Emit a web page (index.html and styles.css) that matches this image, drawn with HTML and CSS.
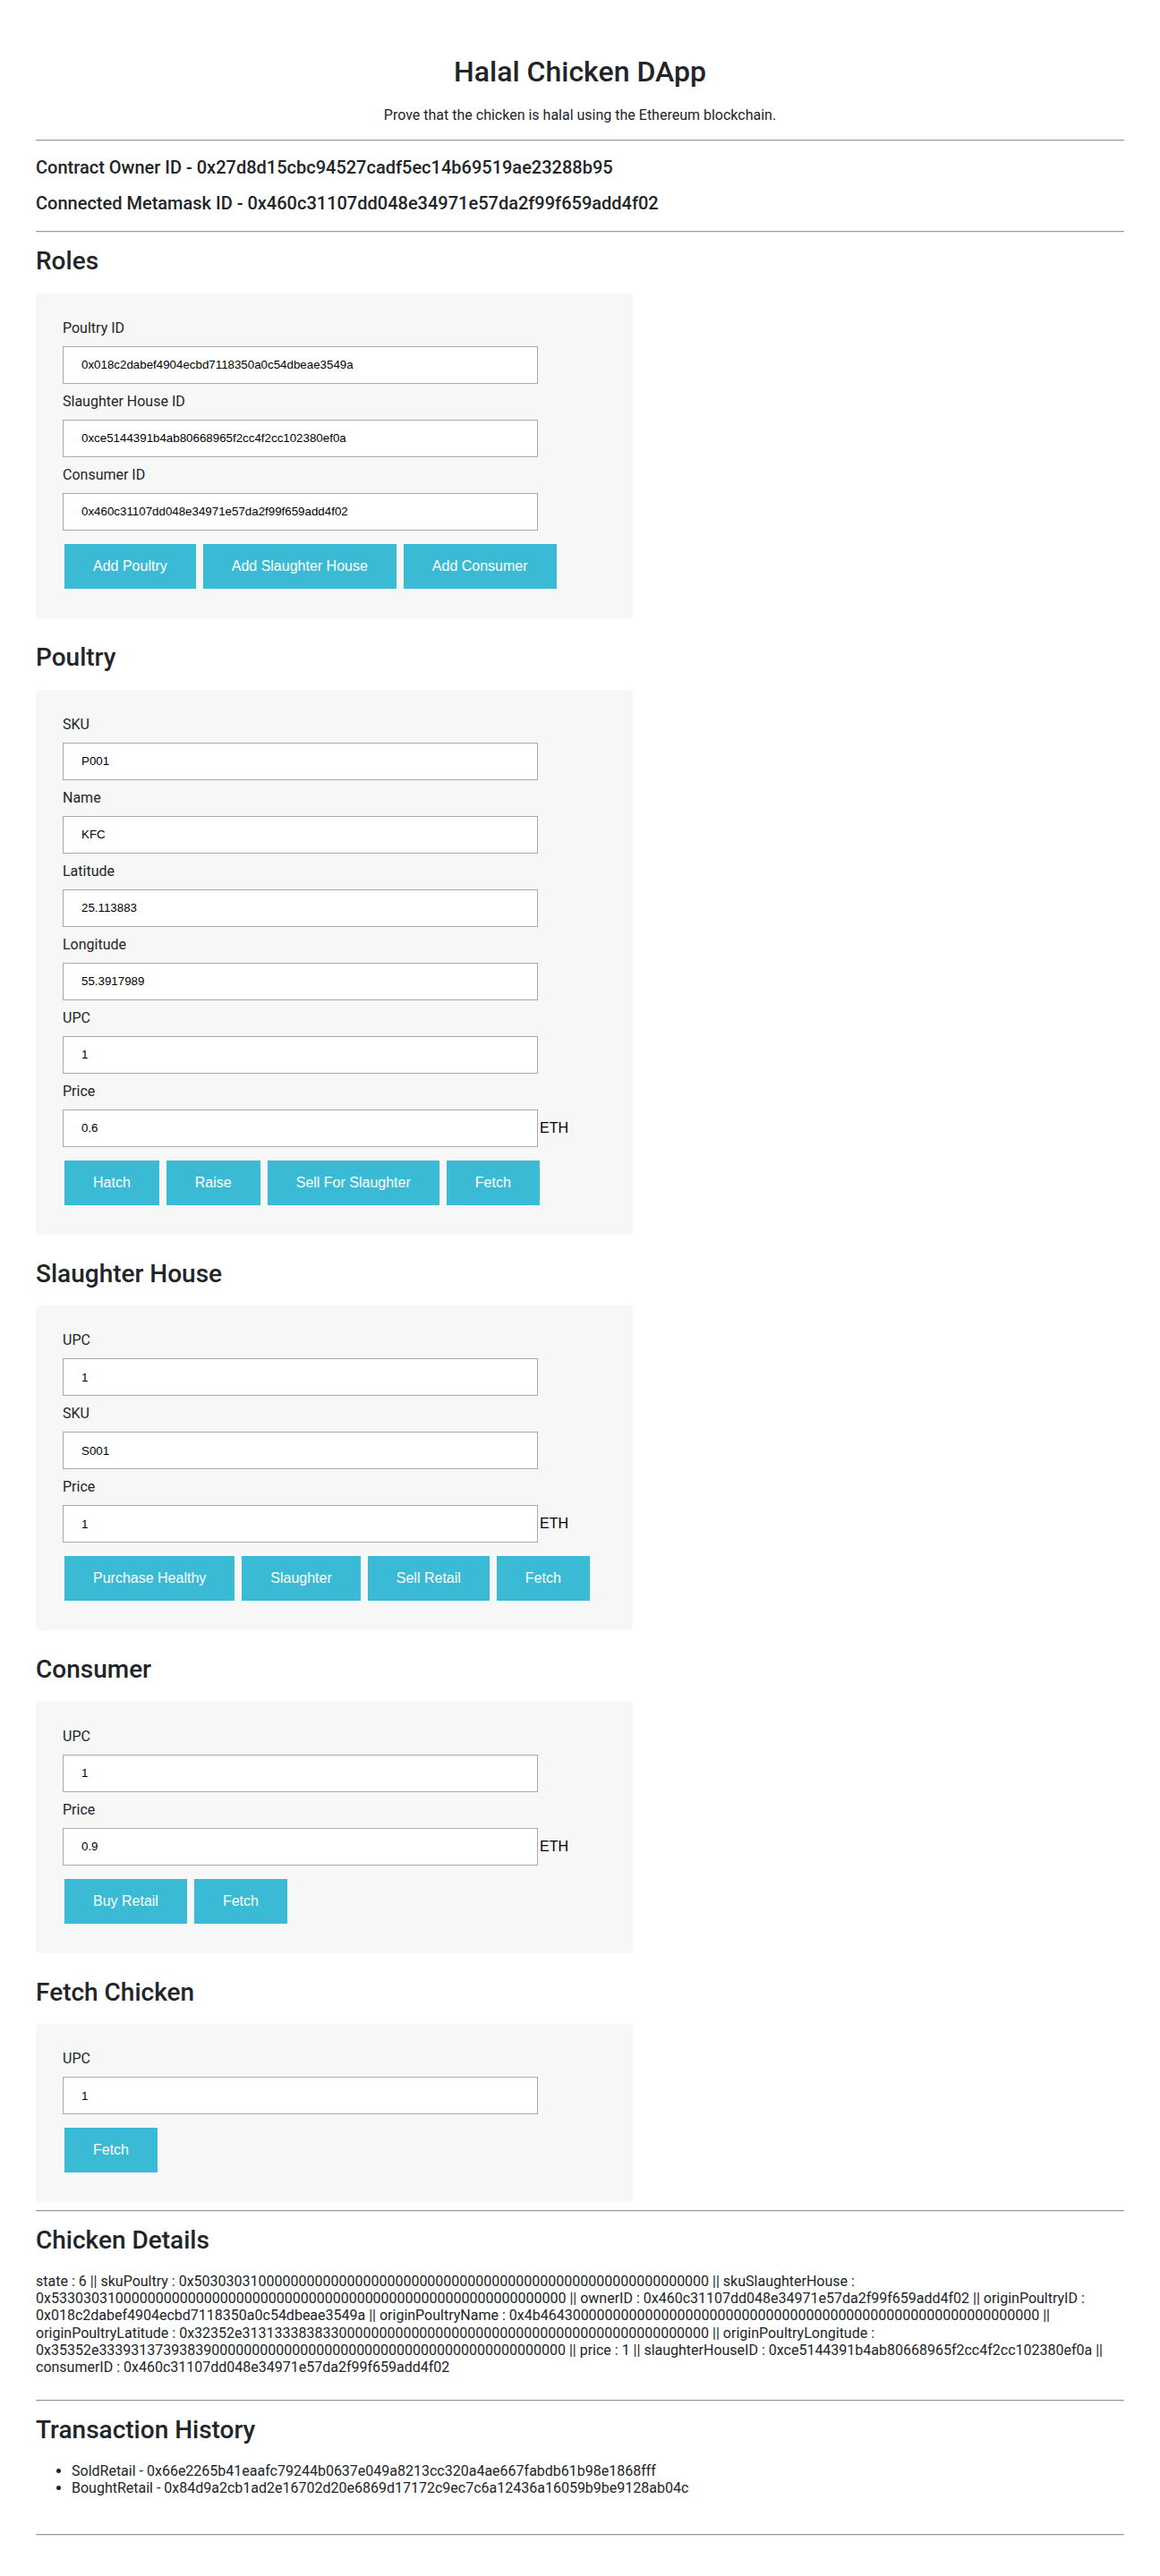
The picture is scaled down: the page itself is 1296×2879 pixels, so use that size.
FILE: index.html
```html
<!DOCTYPE html>
<html lang="en">

<head>
    <meta charset="UTF-8">
    <meta name="viewport" content="width=device-width, initial-scale=1.0">
    <title>Halal Chicken DApp</title>
    <link rel="stylesheet" href="styles.css">
</head>

<body>
    <div class="header">
        <h1 class="title">Halal Chicken DApp</h1>
        <p class="subtitle">Prove that the chicken is halal using the Ethereum blockchain.</p>
    </div>

    <hr class="divider">

    <div class="accounts">
        <h5 class="account">Contract Owner ID - 0x27d8d15cbc94527cadf5ec14b69519ae23288b95</h5>
        <h5 class="account">Connected Metamask ID - 0x460c31107dd048e34971e57da2f99f659add4f02</h5>
    </div>

    <hr class="divider">

    <div class="forms">
        <!-- Roles -->
        <div class="section">
            <h3 class="section-title">Roles</h3>
            <div class="panel">
                <label class="field-label" for="poultryID">Poultry ID</label>
                <input class="field-input" type="text" id="poultryID" value="0x018c2dabef4904ecbd7118350a0c54dbeae3549a">
                <label class="field-label" for="slaughterHouseID">Slaughter House ID</label>
                <input class="field-input" type="text" id="slaughterHouseID" value="0xce5144391b4ab80668965f2cc4f2cc102380ef0a">
                <label class="field-label" for="consumerID">Consumer ID</label>
                <input class="field-input" type="text" id="consumerID" value="0x460c31107dd048e34971e57da2f99f659add4f02">
                <div class="actions">
                    <button class="btn" type="button">Add Poultry</button>
                    <button class="btn" type="button">Add Slaughter House</button>
                    <button class="btn" type="button">Add Consumer</button>
                </div>
            </div>
        </div>

        <!-- Poultry -->
        <div class="section">
            <h3 class="section-title">Poultry</h3>
            <div class="panel">
                <label class="field-label" for="sku">SKU</label>
                <input class="field-input" type="text" id="sku" value="P001">
                <label class="field-label" for="name">Name</label>
                <input class="field-input" type="text" id="name" value="KFC">
                <label class="field-label" for="latitude">Latitude</label>
                <input class="field-input" type="text" id="latitude" value="25.113883">
                <label class="field-label" for="longitude">Longitude</label>
                <input class="field-input" type="text" id="longitude" value="55.3917989">
                <label class="field-label" for="upc">UPC</label>
                <input class="field-input" type="text" id="upc" value="1">
                <label class="field-label" for="price">Price</label>
                <div class="price-row">
                    <input class="field-input" type="text" id="price" value="0.6"><span class="unit">ETH</span>
                </div>
                <div class="actions">
                    <button class="btn" type="button">Hatch</button>
                    <button class="btn" type="button">Raise</button>
                    <button class="btn" type="button">Sell For Slaughter</button>
                    <button class="btn" type="button">Fetch</button>
                </div>
            </div>
        </div>

        <!-- Slaughter House -->
        <div class="section">
            <h3 class="section-title">Slaughter House</h3>
            <div class="panel">
                <label class="field-label" for="shUpc">UPC</label>
                <input class="field-input" type="text" id="shUpc" value="1">
                <label class="field-label" for="shSku">SKU</label>
                <input class="field-input" type="text" id="shSku" value="S001">
                <label class="field-label" for="shPrice">Price</label>
                <div class="price-row">
                    <input class="field-input" type="text" id="shPrice" value="1"><span class="unit">ETH</span>
                </div>
                <div class="actions">
                    <button class="btn" type="button">Purchase Healthy</button>
                    <button class="btn" type="button">Slaughter</button>
                    <button class="btn" type="button">Sell Retail</button>
                    <button class="btn" type="button">Fetch</button>
                </div>
            </div>
        </div>

        <!-- Consumer -->
        <div class="section">
            <h3 class="section-title">Consumer</h3>
            <div class="panel">
                <label class="field-label" for="cUpc">UPC</label>
                <input class="field-input" type="text" id="cUpc" value="1">
                <label class="field-label" for="cPrice">Price</label>
                <div class="price-row">
                    <input class="field-input" type="text" id="cPrice" value="0.9"><span class="unit">ETH</span>
                </div>
                <div class="actions">
                    <button class="btn" type="button">Buy Retail</button>
                    <button class="btn" type="button">Fetch</button>
                </div>
            </div>
        </div>

        <!-- Fetch Chicken -->
        <div class="section">
            <h3 class="section-title">Fetch Chicken</h3>
            <div class="panel">
                <label class="field-label" for="fUpc">UPC</label>
                <input class="field-input" type="text" id="fUpc" value="1">
                <div class="actions">
                    <button class="btn" type="button">Fetch</button>
                </div>
            </div>
        </div>
    </div>

    <hr class="divider">

    <div class="details">
        <h3 class="section-title">Chicken Details</h3>
        <p class="details-text">state : 6 || skuPoultry : 0x5030303100000000000000000000000000000000000000000000000000000000 || skuSlaughterHouse : 0x5330303100000000000000000000000000000000000000000000000000000000 || ownerID : 0x460c31107dd048e34971e57da2f99f659add4f02 || originPoultryID : 0x018c2dabef4904ecbd7118350a0c54dbeae3549a || originPoultryName : 0x4b46430000000000000000000000000000000000000000000000000000000000 || originPoultryLatitude : 0x32352e3131333838330000000000000000000000000000000000000000000000 || originPoultryLongitude : 0x35352e3339313739383900000000000000000000000000000000000000000000 || price : 1 || slaughterHouseID : 0xce5144391b4ab80668965f2cc4f2cc102380ef0a || consumerID : 0x460c31107dd048e34971e57da2f99f659add4f02</p>
    </div>

    <hr class="divider">

    <div class="history">
        <h3 class="section-title">Transaction History</h3>
        <ul class="history-list">
            <li>SoldRetail - 0x66e2265b41eaafc79244b0637e049a8213cc320a4ae667fabdb61b98e1868fff</li>
            <li>BoughtRetail - 0x84d9a2cb1ad2e16702d20e6869d17172c9ec7c6a12436a16059b9be9128ab04c</li>
        </ul>
    </div>

    <hr class="divider">
</body>

</html>
```

FILE: styles.css
```css
body {
    margin: 0;
    padding: 0 40px 48px;
    font-family: Roboto, "Liberation Sans", sans-serif;
    font-size: 16px;
    color: #212529;
    background-color: #fff;
}

.header {
    padding-top: 61px;
    text-align: center;
}

.title {
    margin: 0 0 18px;
    font-size: 32px;
    line-height: 1.2;
    font-weight: 500;
}

.subtitle {
    margin: 0 0 15px;
    line-height: 1.5;
}

/* grey rule between blocks */
.divider {
    height: 0;
    margin: 0;
    border: 0;
    border-top: 1px solid #9c9c9c;
    border-bottom: 1px solid #e4e4e4;
}

.accounts {
    padding: 17px 0 19px;
}

.account {
    margin: 0;
    font-size: 20px;
    line-height: 1.2;
    font-weight: 500;
}

.account + .account {
    margin-top: 16px;
}

.forms {
    padding: 15px 0 9px;
}

.section + .section {
    margin-top: 27px;
}

.section-title {
    margin: 0 0 19px;
    font-size: 28px;
    line-height: 1.2;
    font-weight: 500;
}

.panel {
    box-sizing: border-box;
    width: 667px;
    padding: 27px 30px 33px;
    background-color: #f7f7f7;
    border-radius: 4px;
}

.field-label {
    display: block;
    margin-bottom: 8px;
    line-height: 1.5;
}

.field-input {
    display: block;
    box-sizing: border-box;
    width: 531px;
    height: 42px;
    margin: 0 0 8px;
    padding: 0 20px;
    border: 1px solid #a9a9a9;
    background-color: #fff;
    font-family: "Liberation Sans", Arial, sans-serif;
    font-size: 13.333px;
    color: #000;
}

.price-row {
    display: flex;
    align-items: center;
    margin-bottom: 8px;
}

.price-row .field-input {
    margin: 0;
}

.unit {
    margin-left: 2px;
    font-family: "Liberation Sans", Arial, sans-serif;
    font-size: 16px;
    color: #000;
}

/* input margin (8px) collapses into this one */
.actions {
    display: flex;
    gap: 8px;
    margin: 15px 0 0 2px;
}

.btn {
    height: 50px;
    padding: 0 32px;
    border: none;
    background-color: #3bbad5;
    color: #fff;
    font-family: "Liberation Sans", Arial, sans-serif;
    font-size: 16px;
    cursor: pointer;
}

.details {
    padding: 15px 0 27px;
}

.details-text {
    margin: 0;
    line-height: 1.2;
}

.history {
    padding: 15px 0 0;
}

.history-list {
    margin: 0 0 42px;
    padding-left: 40px;
    line-height: 1.2;
}
```
